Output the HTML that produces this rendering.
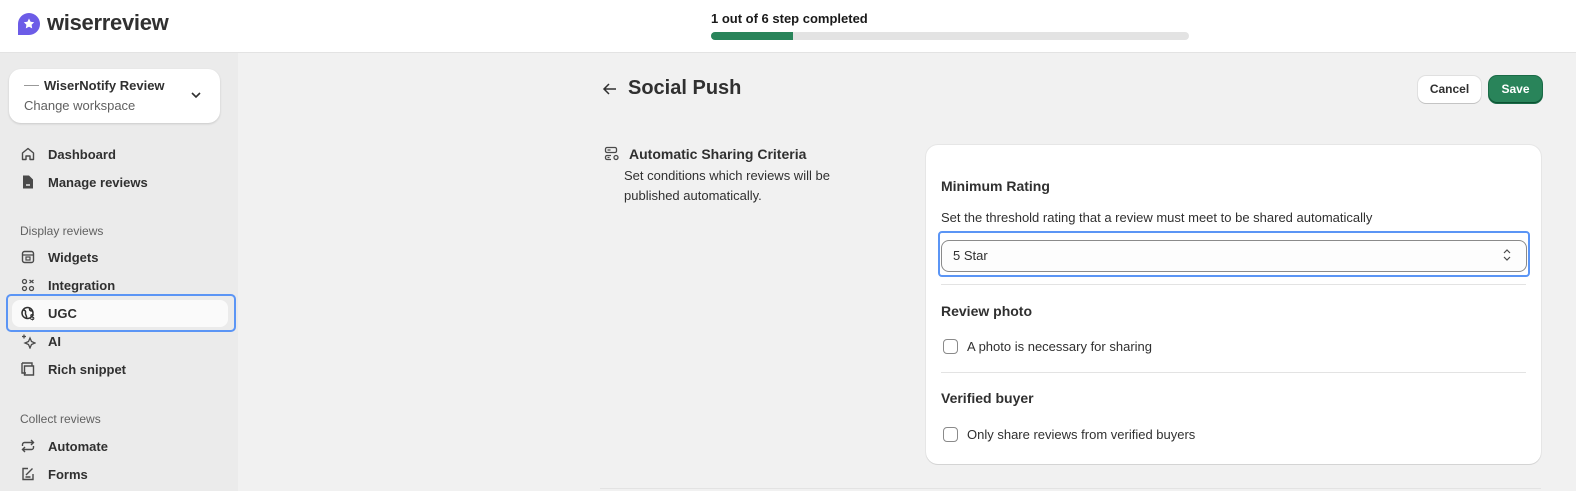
<!DOCTYPE html>
<html><head><meta charset="utf-8"><style>
*{box-sizing:border-box;margin:0;padding:0}
body{width:1576px;height:491px;overflow:hidden;background:#f1f1f1;font-family:"Liberation Sans",sans-serif;color:#303030;position:relative;font-size:13px}
.abs{position:absolute}
.hdr{left:0;top:0;width:1576px;height:53px;background:#fff;border-bottom:1px solid #e3e3e3}
.side{left:0;top:53px;width:238px;height:438px;background:#ebebeb}
.nav{position:absolute;left:20px;font-size:13px;font-weight:bold;color:#303030;display:flex;align-items:center}
.nav svg{width:16px;height:16px;margin-right:12px}
.sec{position:absolute;left:20px;font-size:12px;color:#616161}
.card{left:926px;top:145px;width:615px;height:319px;background:#fff;border-radius:12px;box-shadow:0 1px 0 #d4d4d4,0 0 0 1px #e6e6e6}
.h{font-size:14px;font-weight:bold;color:#303030}
.cb{width:15px;height:15px;border:1.3px solid #8a8a8a;border-radius:4px;background:#fff}
</style></head><body>
<div class="abs hdr"></div>
<svg class="abs" style="left:17px;top:12px" width="24" height="24" viewBox="0 0 24 24"><path d="M12 1a11 11 0 1 1 0 22H1V12A11 11 0 0 1 12 1z" fill="#6c5ce7"/><path d="M12 6.5l1.6 3.3 3.6.5-2.6 2.5.6 3.6-3.2-1.7-3.2 1.7.6-3.6-2.6-2.5 3.6-.5z" fill="#fff"/></svg>
<div class="abs" style="left:47px;top:10px;font-size:22px;font-weight:bold;color:#303030;letter-spacing:-0.3px">wiserreview</div>
<div class="abs" style="left:711px;top:11px;font-size:13px;font-weight:bold;color:#1a1a1a">1 out of 6 step completed</div>
<div class="abs" style="left:711px;top:32px;width:478px;height:8px;border-radius:4px;background:#e3e3e3"><div style="width:82px;height:8px;border-radius:4px 0 0 4px;background:#29845a"></div></div>
<div class="abs side"></div>
<div class="abs" style="left:9px;top:69px;width:211px;height:54px;background:#fff;border-radius:12px;box-shadow:0 1px 2px rgba(0,0,0,.15)"></div>
<div class="abs" style="left:24px;top:85px;width:15px;height:1px;background:#999"></div>
<div class="abs" style="left:44px;top:78px;font-size:13px;font-weight:bold">WiserNotify Review</div>
<div class="abs" style="left:24px;top:98px;font-size:13px;color:#616161">Change workspace</div>
<svg class="abs" style="left:190px;top:91px" width="12" height="8" viewBox="0 0 12 8"><path d="M2 2l4 4 4-4" fill="none" stroke="#303030" stroke-width="1.6"/></svg>
<div class="nav" style="top:146px"><svg viewBox="0 0 16 16"><path d="M2.5 7L8 2.5 13.5 7v6.5h-3.5V10h-4v3.5H2.5z" fill="none" stroke="#4a4a4a" stroke-width="1.4" stroke-linejoin="round"/></svg>Dashboard</div>
<div class="nav" style="top:174px"><svg viewBox="0 0 16 16"><path d="M3 1.5h6l4 4v9H3z" fill="#4a4a4a"/><path d="M6 11h4" stroke="#fff" stroke-width="1.3"/></svg>Manage reviews</div>
<div class="sec" style="top:224px">Display reviews</div>
<div class="nav" style="top:249px"><svg viewBox="0 0 16 16"><rect x="2.5" y="2.5" width="11" height="11" rx="2" fill="none" stroke="#4a4a4a" stroke-width="1.4"/><path d="M2.5 6h11" stroke="#4a4a4a" stroke-width="1.3"/><rect x="6" y="8" width="4" height="3" fill="none" stroke="#4a4a4a" stroke-width="1.2"/></svg>Widgets</div>
<div class="nav" style="top:277px"><svg viewBox="0 0 16 16"><g fill="none" stroke="#4a4a4a" stroke-width="1.3"><circle cx="4.5" cy="4.5" r="2"/><circle cx="11.5" cy="11.5" r="2"/><circle cx="4.5" cy="11.5" r="2"/><path d="M9.5 3l4 3M13.5 3l-4 3"/></g></svg>Integration</div>
<div class="abs" style="left:6px;top:294px;width:230px;height:38px;border:2px solid #5b95f5;border-radius:5px"></div>
<div class="abs" style="left:12px;top:300px;width:216px;height:27px;background:#fafafa;border-radius:8px"></div>
<div class="nav" style="top:305px"><svg viewBox="0 0 16 16"><g fill="none" stroke="#303030" stroke-width="1.5"><circle cx="7.5" cy="8" r="5.5"/><path d="M3 5c2 0 3 1 2.5 3S7 10 6.5 13M10 3c-1 2 0 3 2 3"/></g><text x="10" y="15" font-size="8" font-weight="bold" fill="#303030">$</text></svg>UGC</div>
<div class="nav" style="top:333px"><svg viewBox="0 0 16 16"><path d="M10 5l1.5 3.5L15 10l-3.5 1.5L10 15l-1.5-3.5L5 10l3.5-1.5z" fill="none" stroke="#4a4a4a" stroke-width="1.3"/><path d="M4 1.5v4M2 3.5h4" stroke="#4a4a4a" stroke-width="1.3"/></svg>AI</div>
<div class="nav" style="top:361px"><svg viewBox="0 0 16 16"><g fill="none" stroke="#4a4a4a" stroke-width="1.4"><path d="M2 2h10v3M2 2v10h4"/><path d="M4.5 5h9v9h-9z"/></g></svg>Rich snippet</div>
<div class="sec" style="top:412px">Collect reviews</div>
<div class="nav" style="top:438px"><svg viewBox="0 0 16 16"><g fill="none" stroke="#4a4a4a" stroke-width="1.4"><path d="M2.5 8V6.5A2 2 0 0 1 4.5 4.5h9M11 2l2.5 2.5L11 7M13.5 8v1.5a2 2 0 0 1-2 2h-9M5 9l-2.5 2.5L5 14"/></g></svg>Automate</div>
<div class="nav" style="top:466px"><svg viewBox="0 0 16 16"><g fill="none" stroke="#4a4a4a" stroke-width="1.4"><path d="M8 2.5H3v11h10V8"/><path d="M6 9l6.5-6.5M5.5 11h5"/></g></svg>Forms</div>

<svg class="abs" style="left:602px;top:82px" width="16" height="14" viewBox="0 0 16 14"><path d="M14 7H2.5M7 2L2 7l5 5" fill="none" stroke="#303030" stroke-width="1.5"/></svg>
<div class="abs" style="left:628px;top:77px;font-size:20px;font-weight:bold;color:#303030">Social Push</div>
<div class="abs" style="left:1418px;top:76px;width:63px;height:27px;background:#fff;border-radius:8px;box-shadow:0 1px 0 #c4c4c4,0 0 0 1px #e0e0e0;font-size:12px;font-weight:bold;text-align:center;line-height:27px;color:#303030">Cancel</div>
<div class="abs" style="left:1489px;top:76px;width:53px;height:27px;background:#29845a;border-radius:8px;box-shadow:inset 0 -1px 0 #0c5132,0 0 0 1px #1a6b47;font-size:12px;font-weight:bold;text-align:center;line-height:27px;color:#fff">Save</div>

<svg class="abs" style="left:604px;top:146px" width="16" height="16" viewBox="0 0 16 16"><g fill="none" stroke="#4a4a4a" stroke-width="1.3"><rect x="1.5" y="1.5" width="11" height="5" rx="1.5"/><path d="M7 9.5H3a1.5 1.5 0 0 0-1.5 1.5v1a1.5 1.5 0 0 0 1.5 1.5h4"/><path d="M3.5 4h3M3.5 11.5h2"/><circle cx="12" cy="11.5" r="2"/></g></svg>
<div class="abs" style="left:629px;top:146px;font-size:14px;font-weight:bold">Automatic Sharing Criteria</div>
<div class="abs" style="left:624px;top:166px;font-size:13px;line-height:20px;color:#303030">Set conditions which reviews will be<br>published automatically.</div>

<div class="abs card"></div>
<div class="abs h" style="left:941px;top:178px">Minimum Rating</div>
<div class="abs" style="left:941px;top:210px;font-size:13px">Set the threshold rating that a review must meet to be shared automatically</div>
<div class="abs" style="left:938px;top:231px;width:592px;height:46px;border:2px solid #5b95f5;border-radius:4px"></div>
<div class="abs" style="left:941px;top:240px;width:586px;height:32px;border:1px solid #8a8a8a;border-radius:8px;background:#fdfdfd;padding-left:11px;line-height:30px;font-size:13px">5 Star</div>
<svg class="abs" style="left:1502px;top:247px" width="10" height="16" viewBox="0 0 10 16"><path d="M2 6l3-3 3 3M2 10l3 3 3-3" fill="none" stroke="#4a4a4a" stroke-width="1.2"/></svg>
<div class="abs" style="left:941px;top:284px;width:585px;height:1px;background:#e3e3e3"></div>
<div class="abs h" style="left:941px;top:303px">Review photo</div>
<div class="abs cb" style="left:943px;top:339px"></div>
<div class="abs" style="left:967px;top:339px;font-size:13px">A photo is necessary for sharing</div>
<div class="abs" style="left:941px;top:372px;width:585px;height:1px;background:#e3e3e3"></div>
<div class="abs h" style="left:941px;top:390px">Verified buyer</div>
<div class="abs cb" style="left:943px;top:427px"></div>
<div class="abs" style="left:967px;top:427px;font-size:13px">Only share reviews from verified buyers</div>
<div class="abs" style="left:600px;top:488px;width:941px;height:1px;background:#e3e3e3"></div>
</body></html>
